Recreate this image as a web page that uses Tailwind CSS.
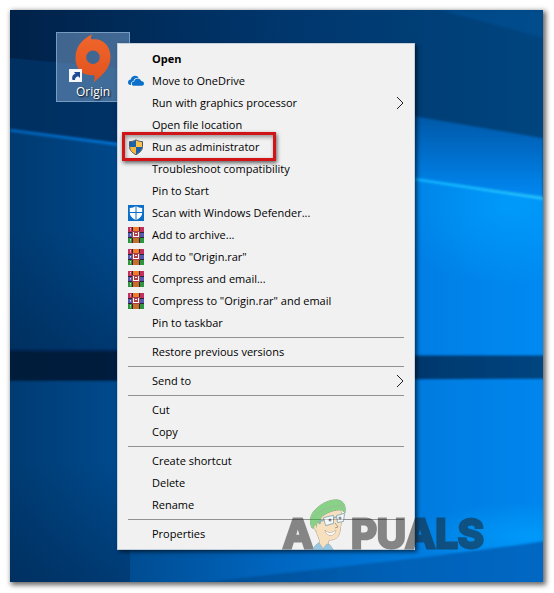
<!DOCTYPE html>
<html lang="en">
<head>
    <meta charset="UTF-8">
    <meta name="viewport" content="width=device-width, initial-scale=1.0">
    <title>Desktop</title>
    <script src="https://cdn.jsdelivr.net/npm/@tailwindcss/browser@4"></script>
</head>
<body class="min-h-screen bg-white pt-[10px] pr-[11px] pb-[11px] pl-[10px] flex font-['Open_Sans','Noto_Sans',sans-serif] text-[11px] text-black">

    <!-- Shared icons -->
    <svg class="hidden">
        <symbol id="rar" viewBox="0 0 16 16">
            <rect width="16" height="16" fill="#3a2b35"/>
            <rect x="0" y="0" width="16" height="5" fill="#c2305e"/>
            <rect x="0" y="5" width="16" height="6" fill="#5557b0"/>
            <rect x="0" y="11" width="16" height="5" fill="#2f9440"/>
            <path d="M0 5.500h16M0 10.500h16" stroke="#2c2330" stroke-width="1"/>
            <path d="M2.500 1v3M2.500 7v2.500M2.500 12v3" stroke="#e9dcc0" stroke-width="1" stroke-dasharray="1.500 1"/>
            <path d="M4.500 0v5M4.500 11v5M11.500 0v5M11.500 11v5" stroke="#2c2330" stroke-width="1"/>
            <rect x="5" y="0" width="6" height="5" fill="#f57a2a"/>
            <rect x="5" y="11" width="6" height="5" fill="#c4702a"/>
            <rect x="4" y="4" width="8" height="7" fill="#a8404c"/>
            <path d="M5 5h1v4h4V5h1v5H5ZM7 6h2v1H7Z" fill="#fff"/>
        </symbol>
        <symbol id="chevron" viewBox="0 0 8 14">
            <path d="M1 1l6 6-6 6" fill="none" stroke="#222" stroke-width="1"/>
        </symbol>
    </svg>

    <main class="relative flex-1 bg-[#003a70] shadow-[2px_2px_5px_1px_rgba(0,0,0,0.6)]">

        <!-- Wallpaper -->
        <svg class="absolute inset-0 size-full" viewBox="10 10 533 571" preserveAspectRatio="none" aria-hidden="true">
            <defs>
                <linearGradient id="sky"><stop offset="0" stop-color="#002249"/><stop offset=".5" stop-color="#00366c"/><stop offset="1" stop-color="#00457f"/></linearGradient>
                <linearGradient id="pane"><stop offset="0" stop-color="#003a70"/><stop offset=".2" stop-color="#00488a"/><stop offset=".75" stop-color="#007ee4"/><stop offset="1" stop-color="#008af2"/></linearGradient>
                <linearGradient id="low"><stop offset="0" stop-color="#003b72"/><stop offset=".2" stop-color="#004a8d"/><stop offset=".5" stop-color="#0066c0"/><stop offset=".78" stop-color="#007ce0"/><stop offset="1" stop-color="#0086ee"/></linearGradient>
                <linearGradient id="ray" x2="0" y2="1"><stop offset="0" stop-color="#00529a"/><stop offset=".5" stop-color="#006cc8"/><stop offset="1" stop-color="#008af4"/></linearGradient>
                <linearGradient id="bar"><stop offset="0" stop-color="#001a3a"/><stop offset=".2" stop-color="#001d3f"/><stop offset=".75" stop-color="#00376c"/><stop offset="1" stop-color="#004580"/></linearGradient>
                <linearGradient id="foot"><stop offset="0" stop-color="#004a90"/><stop offset=".6" stop-color="#0062b8"/><stop offset="1" stop-color="#0068c4"/></linearGradient>
                <linearGradient id="beam"><stop offset="0" stop-color="#0060b4"/><stop offset=".2" stop-color="#0070cc"/><stop offset=".75" stop-color="#08acff"/><stop offset="1" stop-color="#28c4ff"/></linearGradient>
                <linearGradient id="fade" x2="0" y2="1"><stop offset="0" stop-color="#001c40" stop-opacity="0"/><stop offset="1" stop-color="#001c40" stop-opacity=".35"/></linearGradient>
                <radialGradient id="glow"><stop offset="0" stop-color="#00a2ff"/><stop offset="1" stop-color="#00a2ff" stop-opacity="0"/></radialGradient>
                <filter id="soft"><feGaussianBlur stdDeviation="1.200"/></filter>
                <clipPath id="under"><path d="M10 129L117 143L415 178L543 198V360H10Z"/></clipPath>
            </defs>
            <rect x="10" y="10" width="533" height="571" fill="url(#sky)"/>
            <path d="M440 10L543 38V10Z" fill="#00529a" opacity=".5" filter="url(#soft)"/>
            <path d="M10 58L117 68V143L10 129Z" fill="#00366c" opacity=".7"/>
            <path d="M330 104L415 116L543 138V198L330 168Z" fill="url(#ray)" filter="url(#soft)"/>
            <path d="M10 129L117 143L415 178L543 198V360H10Z" fill="url(#pane)"/>
            <rect x="10" y="230" width="120" height="120" fill="url(#fade)"/>
            <ellipse cx="510" cy="205" rx="120" ry="80" fill="url(#glow)" opacity=".7" clip-path="url(#under)"/>
            <path d="M10 130L117 144L415 179L543 198" fill="none" stroke="url(#beam)" stroke-width="3" filter="url(#soft)"/>
            <rect x="10" y="375" width="533" height="206" fill="url(#low)"/>
            <rect x="10" y="461" width="120" height="120" fill="url(#fade)"/>
            <ellipse cx="530" cy="535" rx="120" ry="34" fill="url(#glow)" opacity=".7"/>
            <path d="M190 583C300 570 440 556 546 540V583Z" fill="url(#foot)" filter="url(#soft)"/>
            <path d="M8 350H117L415 355H545V378L117 380H8Z" fill="url(#bar)" filter="url(#soft)"/>
        </svg>

        <!-- Shortcut -->
        <a href="#" class="absolute left-[46px] top-[22px] w-[74px] h-[70px] flex flex-col items-center bg-[#7fa6cf]/50 border border-[#86a9cc]/80 text-white">
            <svg class="w-[50px] h-[50px]" viewBox="0 0 50 50" aria-hidden="true">
                <defs><linearGradient id="flame" x2="0" y2="1"><stop offset="0" stop-color="#f0662c"/><stop offset="1" stop-color="#e2521f"/></linearGradient></defs>
                <path fill="url(#flame)" fill-rule="evenodd" d="M24.500 1C22.500 3.500 22.500 5 23.500 6.500C33 4.500 42.500 11 42.500 24C42.500 36 33 43 25.500 49.500C26.800 46.500 27 44 26 42C15 43.500 7.500 36 7.500 25C7.500 13 14.500 6 24.500 1ZM25 17.500A6.800 6.800 0 1 0 25 31.100A6.800 6.800 0 1 0 25 17.500Z"/>
                <rect x="1" y="36" width="13" height="13" fill="#f4f6fa"/>
                <path d="M4.500 47C3.500 43.500 5 41.500 7.500 40.800L6 39H12V45L10.200 43.300C7.800 43.800 7 45.500 7 47Z" fill="#1f4a94"/>
            </svg>
            <span class="text-xs leading-[18px] [text-shadow:1px_1px_2px_#000]">Origin</span>
        </a>

        <!-- Context menu -->
        <div role="menu" class="absolute left-[107px] top-[33px] w-[298px] py-1 bg-[#f1f1f1] border border-[#c4d0dc] shadow-[2px_2px_4px_rgba(0,0,0,0.6)]">
            <button role="menuitem" class="w-full h-[22px] px-[10px] flex items-center gap-2 font-bold"><span class="w-4"></span>Open</button>
            <button role="menuitem" class="w-full h-[22px] px-[10px] flex items-center gap-2">
                <svg class="size-4" viewBox="0 0 16 16" aria-hidden="true">
                    <path d="M0 9.500C0 7.700 1.200 6.600 2.700 6.500C3.200 4 5.200 2.800 7 2.800C8.700 2.800 10 3.600 10.800 4.900C8 4.600 6 6 5.500 7.900C3.600 8.200 2.600 9.800 3 12H2.500C1 12 0 11 0 9.500Z" fill="#0a70cc"/>
                    <path d="M3.800 10.700C3.800 9.300 4.900 8.500 6.100 8.500C6.500 6.700 8 5.500 9.700 5.500C11.400 5.500 12.700 6.500 13.100 8.100C14.800 8.100 16 9.200 16 10.600C16 12 15 12.800 13.800 12.800H6C4.800 12.800 3.800 12 3.800 10.700Z" fill="#0a70cc"/>
                </svg>
                Move to OneDrive
            </button>
            <button role="menuitem" class="w-full h-[22px] px-[10px] flex items-center gap-2"><span class="w-4"></span>Run with graphics processor<svg class="ml-auto w-2 h-[14px]" aria-hidden="true"><use href="#chevron"/></svg></button>
            <button role="menuitem" class="w-full h-[22px] px-[10px] flex items-center gap-2"><span class="w-4"></span>Open file location</button>
            <button role="menuitem" class="relative w-full h-[22px] px-[10px] flex items-center gap-2">
                <svg class="size-4" viewBox="0 0 16 16" aria-hidden="true">
                    <clipPath id="shield"><path d="M8 1C6 2.300 4 2.800 1.800 2.800V7.500C1.800 11.500 4.500 13.800 8 15.500C11.500 13.800 14.200 11.500 14.200 7.500V2.800C12 2.800 10 2.300 8 1Z"/></clipPath>
                    <g clip-path="url(#shield)">
                        <rect width="8" height="8" fill="#1c62a8"/><rect x="8" width="8" height="8" fill="#fbc148"/>
                        <rect y="8" width="8" height="8" fill="#f5b63a"/><rect x="8" y="8" width="8" height="8" fill="#1c62a8"/>
                    </g>
                    <path d="M8 .8C6 2.100 4 2.600 1.500 2.600V7.500C1.500 11.500 4.500 14 8 15.700C11.500 14 14.500 11.500 14.500 7.500V2.600C12 2.600 10 2.100 8 .8Z" fill="none" stroke="#4a5560" stroke-width="1"/>
                </svg>
                Run as administrator
                <span class="absolute left-1 -top-1 w-[154px] h-[29px] border-3 border-[#d01418] shadow-[1px_2px_4px_rgba(0,0,0,0.6),inset_1px_2px_4px_rgba(0,0,0,0.4)]"></span>
            </button>
            <button role="menuitem" class="w-full h-[22px] px-[10px] flex items-center gap-2"><span class="w-4"></span>Troubleshoot compatibility</button>
            <button role="menuitem" class="w-full h-[22px] px-[10px] flex items-center gap-2"><span class="w-4"></span>Pin to Start</button>
            <button role="menuitem" class="w-full h-[22px] px-[10px] flex items-center gap-2">
                <svg class="size-4" viewBox="0 0 16 16" aria-hidden="true">
                    <rect width="16" height="16" fill="#0b6fc8"/>
                    <path d="M8 1C6.200 2.300 4 2.900 1.800 2.900V7.500C1.800 11.300 4.500 13.500 8 15C11.500 13.500 14.200 11.300 14.200 7.500V2.900C12 2.900 9.800 2.300 8 1Z" fill="#fff"/>
                    <path d="M8 1v14M1 7.500h14" stroke="#0b6fc8" stroke-width="1"/>
                </svg>
                Scan with Windows Defender...
            </button>
            <button role="menuitem" class="w-full h-[22px] px-[10px] flex items-center gap-2"><svg class="size-4" aria-hidden="true"><use href="#rar"/></svg>Add to archive...</button>
            <button role="menuitem" class="w-full h-[22px] px-[10px] flex items-center gap-2"><svg class="size-4" aria-hidden="true"><use href="#rar"/></svg>Add to "Origin.rar"</button>
            <button role="menuitem" class="w-full h-[22px] px-[10px] flex items-center gap-2"><svg class="size-4" aria-hidden="true"><use href="#rar"/></svg>Compress and email...</button>
            <button role="menuitem" class="w-full h-[22px] px-[10px] flex items-center gap-2"><svg class="size-4" aria-hidden="true"><use href="#rar"/></svg>Compress to "Origin.rar" and email</button>
            <button role="menuitem" class="w-full h-[22px] px-[10px] flex items-center gap-2"><span class="w-4"></span>Pin to taskbar</button>
            <hr class="mx-[10px] my-[3px] border-[#919191]">
            <button role="menuitem" class="w-full h-[22px] px-[10px] flex items-center gap-2"><span class="w-4"></span>Restore previous versions</button>
            <hr class="mx-[10px] my-[3px] border-[#919191]">
            <button role="menuitem" class="w-full h-[22px] px-[10px] flex items-center gap-2"><span class="w-4"></span>Send to<svg class="ml-auto w-2 h-[14px]" aria-hidden="true"><use href="#chevron"/></svg></button>
            <hr class="mx-[10px] my-[3px] border-[#919191]">
            <button role="menuitem" class="w-full h-[22px] px-[10px] flex items-center gap-2"><span class="w-4"></span>Cut</button>
            <button role="menuitem" class="w-full h-[22px] px-[10px] flex items-center gap-2"><span class="w-4"></span>Copy</button>
            <hr class="mx-[10px] my-[3px] border-[#919191]">
            <button role="menuitem" class="w-full h-[22px] px-[10px] flex items-center gap-2"><span class="w-4"></span>Create shortcut</button>
            <button role="menuitem" class="w-full h-[22px] px-[10px] flex items-center gap-2"><span class="w-4"></span>Delete</button>
            <button role="menuitem" class="w-full h-[22px] px-[10px] flex items-center gap-2"><span class="w-4"></span>Rename</button>
            <hr class="mx-[10px] my-[3px] border-[#919191]">
            <button role="menuitem" class="w-full h-[22px] px-[10px] flex items-center gap-2"><span class="w-4"></span>Properties</button>
        </div>

        <!-- Watermark -->
        <div class="absolute left-[273px] top-[488px] flex items-end opacity-50 pointer-events-none font-['Inter',sans-serif] font-bold text-[40px] leading-[56px] text-[#1c1c1c] [-webkit-text-stroke:3px_#1c1c1c] [paint-order:stroke] [stroke-linejoin:round]">
            <span>A</span>
            <svg class="-ml-1 w-[38px] h-[52px] mb-3" viewBox="0 0 38 52" stroke-linejoin="round" aria-hidden="true">
                <path d="M6 24C6 30 7 35 9 38L11 44C8 46 6 49 5 52H23C22 49 21 47 19 45L20 42C27 42 30 39 31 33L33 19L31 9L11 15Z" fill="#fbd08c" stroke="#6b4a2c" stroke-width="1"/>
                <path d="M4 52C5 48 8 46 10 45L14 51L18 46C21 47 23 49 24 52Z" fill="#3f9fd0" stroke="#34657c" stroke-width="1"/>
                <path d="M3 30C0 24 1 16 7 11C13 5 22 1 29 2C35 3 37 8 36 15L33 12C26 11 17 15 12 19L11 26L8 24L7 30Z" fill="#22b422" stroke="#315c2a" stroke-width="1"/>
                <path d="M3 21C8 14 19 7 35 8" fill="none" stroke="#3f8a3a" stroke-width="1"/>
                <path d="M15 20L24 18V25L17 27Z M28 18L35 16L34 23L29 24Z" fill="#fff" stroke="#3a7286" stroke-width="2"/>
                <path d="M24 20L28 19M15 22L9 24" stroke="#3a7286" stroke-width="1.500"/>
                <circle cx="21" cy="22" r="1.500" fill="#203050"/><circle cx="31" cy="20" r="1.500" fill="#203050"/>
                <path d="M26 25L29 29L26 30" fill="none" stroke="#6b4a2c" stroke-width="1"/>
                <path d="M16 32C19 36 24 35 27 32C25 39 18 39 16 32Z" fill="#fff" stroke="#6b4a2c" stroke-width="1"/>
                <path d="M7 27C4 27 5 33 8 33" fill="#fbd08c" stroke="#6b4a2c" stroke-width="1"/>
            </svg>
            <span class="ml-1">PUALS</span>
        </div>
    </main>

</body>
</html>
